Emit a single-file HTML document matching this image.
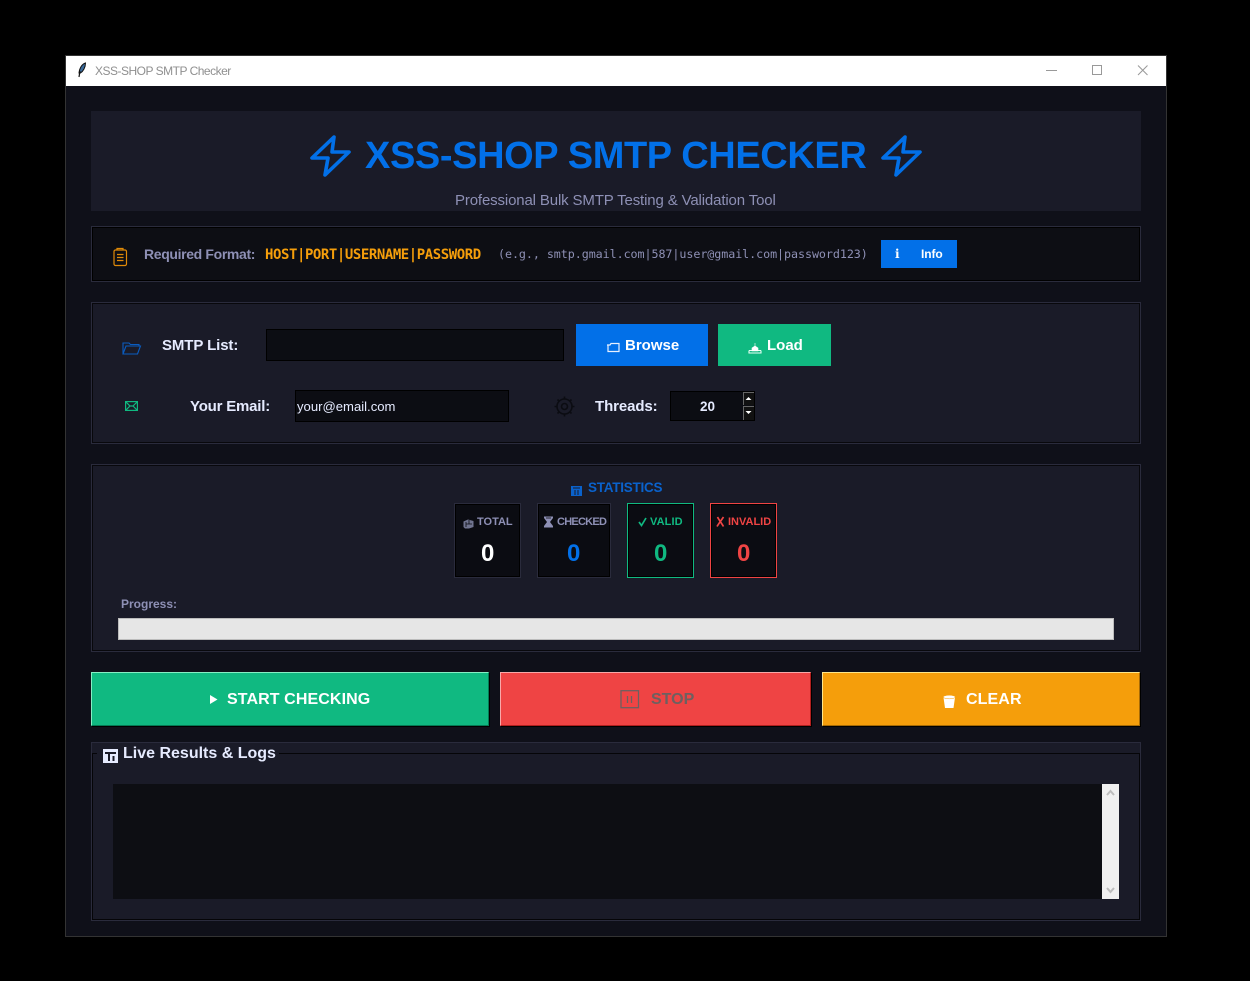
<!DOCTYPE html>
<html><head><meta charset="utf-8"><title>XSS-SHOP SMTP Checker</title>
<style>
html,body{margin:0;padding:0;background:#000;width:1250px;height:981px;overflow:hidden}
body{font-family:"Liberation Sans",sans-serif;position:relative}
.a{position:absolute;box-sizing:border-box}
.t{position:absolute;white-space:nowrap;line-height:1}
svg{position:absolute;overflow:visible}
.sec{position:absolute;box-sizing:border-box;background:#1a1b28;border:1px solid #2a2b3c;box-shadow:inset 0 0 0 1px #08080c}
.stat{position:absolute;box-sizing:border-box;background:#0b0c12;border:1px solid #2a2b3c;box-shadow:inset 0 0 0 1px #000;top:503px;height:75px}
.in{position:absolute;box-sizing:border-box;background:#0c0d13;border:1px solid #000}
</style></head><body>
<div class="a" style="left:65px;top:55px;width:1102px;height:882px;background:#0f1019;border:1px solid #333"></div>
<div class="a" style="left:66px;top:56px;width:1100px;height:30px;background:#fff"></div>
<svg style="left:76px;top:62px" width="13" height="16" viewBox="0 0 13 16"><path d="M9.500 1C6 2 3.500 6 3 11L4.500 11C7 9.500 9.500 5.500 9.500 1Z" fill="#3a6a9a" stroke="#111" stroke-width="1"/><path d="M4 9L3 15" stroke="#111" stroke-width="1.200"/></svg>
<div class="t" style="left:95px;top:65px;font-size:12px;color:#8f8f8f;letter-spacing:-.5px">XSS-SHOP SMTP Checker</div>
<svg style="left:1046px;top:65px" width="110" height="12"><path d="M0 5.500H11" stroke="#999"/><rect x="46.500" y="0.500" width="9" height="9" fill="none" stroke="#999"/><path d="M92 0.500L101.500 10M101.500 0.500L92 10" stroke="#999"/></svg>

<div class="a" style="left:91px;top:111px;width:1050px;height:100px;background:#1a1b28"></div>
<svg style="left:310px;top:134px" width="42" height="44" viewBox="0 0 42 44" fill="none" stroke="#0270e8" stroke-width="3.600" stroke-linejoin="round"><path d="M24 3L2 24H18L15 41L39 18H22Z"/></svg>
<svg style="left:881px;top:134px" width="42" height="44" viewBox="0 0 42 44" fill="none" stroke="#0270e8" stroke-width="3.600" stroke-linejoin="round"><path d="M24 3L2 24H18L15 41L39 18H22Z"/></svg>
<div class="t" style="left:365px;top:137px;font-size:38px;font-weight:bold;color:#0270e8;letter-spacing:-.39px">XSS-SHOP SMTP CHECKER</div>
<div class="t" style="left:455px;top:193px;font-size:15px;color:#8e90b5;letter-spacing:-.14px">Professional Bulk SMTP Testing &amp; Validation Tool</div>

<div class="a" style="left:91px;top:226px;width:1050px;height:56px;background:#0d0e14;border:1px solid #2a2b3c;box-shadow:inset 0 0 0 1px #000"></div>
<svg style="left:112px;top:247px" width="16" height="20" viewBox="0 0 16 20" fill="none" stroke="#e08a08" stroke-width="1.200"><rect x="2" y="3" width="12.500" height="15.500" rx="1.500"/><path d="M5 3V1.500H11V3M5 7.500H11.500M5 10.500H11.500M5 13.500H11.500"/></svg>
<div class="t" style="left:144px;top:247px;font-size:14px;font-weight:bold;color:#8e90b5;letter-spacing:-.35px">Required Format:</div>
<div class="t" style="left:265px;top:248px;font-size:14px;font-weight:bold;color:#f59e0b;font-family:'DejaVu Sans Mono',monospace;letter-spacing:-.44px">HOST|PORT|USERNAME|PASSWORD</div>
<div class="t" style="left:498px;top:249px;font-size:11.700px;color:#8e90b5;font-family:'DejaVu Sans Mono',monospace;letter-spacing:-.06px">(e.g., smtp.gmail.com|587|user@gmail.com|password123)</div>
<div class="a" style="left:881px;top:240px;width:76px;height:28px;background:#0270e8"></div>
<div class="t" style="left:895px;top:248px;font-size:12px;font-weight:bold;color:#fff;font-family:'DejaVu Serif',serif">i</div>
<div class="t" style="left:921px;top:248px;font-size:12px;font-weight:bold;color:#fff;letter-spacing:-.1px">Info</div>

<div class="sec" style="left:91px;top:302px;width:1050px;height:142px"></div>
<svg style="left:122px;top:341px" width="20" height="14" viewBox="0 0 20 14" fill="none" stroke="#0a5cc0" stroke-width="1.100"><path d="M1 13V2H7L8.500 3.500H17V5M1 13H15.500L18.500 5H4L1 13Z"/></svg>
<div class="t" style="left:162px;top:338px;font-size:15px;font-weight:bold;color:#e6ebff;letter-spacing:-.1px">SMTP List:</div>
<div class="in" style="left:266px;top:329px;width:298px;height:32px"></div>
<div class="a" style="left:576px;top:324px;width:132px;height:42px;background:#0270e8"></div>
<svg style="left:606px;top:342px" width="14" height="11" viewBox="0 0 14 11" fill="none" stroke="#e8f0ff" stroke-width="1.200"><path d="M1 3H4L5 1.500H13V9.500H2V3"/></svg>
<div class="t" style="left:625px;top:338px;font-size:15px;font-weight:bold;color:#fff">Browse</div>
<div class="a" style="left:718px;top:324px;width:113px;height:42px;background:#10b981"></div>
<svg style="left:748px;top:342px" width="14" height="12" viewBox="0 0 14 12"><path d="M1 8.500H4M10 8.500H13M1 8.500V11H13V8.500" fill="none" stroke="#e8fff6" stroke-width="1.100"/><path d="M7 1V5M4 6L7 4L10 6V9H4Z" fill="#fff" stroke="#fff" stroke-width=".6"/></svg>
<div class="t" style="left:767px;top:338px;font-size:15px;font-weight:bold;color:#fff">Load</div>

<svg style="left:125px;top:401px" width="13" height="10" viewBox="0 0 13 10" fill="none" stroke="#10b981" stroke-width="1.200"><rect x=".6" y=".6" width="11.800" height="8.800"/><path d="M1 1L5 5H8L12 1M1 9L5 5M12 9L8 5"/></svg>
<div class="t" style="left:190px;top:399px;font-size:15px;font-weight:bold;color:#e6ebff;letter-spacing:-.2px">Your Email:</div>
<div class="in" style="left:295px;top:390px;width:214px;height:32px"></div>
<div class="t" style="left:297px;top:400px;font-size:13.100px;color:#e6ebff">your@email.com</div>
<svg style="left:554px;top:396px" width="21" height="21" viewBox="0 0 21 21" fill="none" stroke="#0b0c12" stroke-width="1.600"><circle cx="10.500" cy="10.500" r="7.500"/><circle cx="10.500" cy="10.500" r="3"/><path d="M10.500 0.500V3M10.500 18V20.500M0.500 10.500H3M18 10.500H20.500M3.500 3.500L5.200 5.200M15.800 15.800L17.500 17.500M3.500 17.500L5.200 15.800M15.800 5.200L17.500 3.500"/></svg>
<div class="t" style="left:595px;top:399px;font-size:15px;font-weight:bold;color:#e6ebff;letter-spacing:-.1px">Threads:</div>
<div class="in" style="left:670px;top:391px;width:85px;height:30px"></div>
<div class="t" style="left:700px;top:400px;font-size:13.500px;font-weight:bold;color:#e6ebff">20</div>
<div class="a" style="left:743px;top:392px;width:11px;height:13px;background:#111;border:1px solid #666;border-right:0;border-bottom:0"></div>
<div class="a" style="left:743px;top:406px;width:11px;height:14px;background:#111;border:1px solid #666;border-right:0;border-bottom:0"></div>
<svg style="left:743px;top:392px" width="11" height="28"><path d="M2.500 8L5.500 5L8.500 8ZM2.500 19L5.500 22L8.500 19Z" fill="#fff"/></svg>

<div class="sec" style="left:91px;top:464px;width:1050px;height:188px"></div>
<svg style="left:571px;top:486px" width="11" height="10" viewBox="0 0 11 10"><rect width="11" height="10" fill="#0a62cc"/><path d="M2 2H9M4 4V9M7 4V9" stroke="#1a1b28"/></svg>
<div class="t" style="left:588px;top:481px;font-size:13.500px;font-weight:bold;color:#0a62cc;letter-spacing:-.25px">STATISTICS</div>

<div class="stat" style="left:454px;width:67px"></div>
<svg style="left:463px;top:519px" width="11" height="10" viewBox="0 0 11 10"><path d="M.5 2.500L5 .5L10.500 2V8L6 9.500H2L.5 8Z" fill="#70748f"/><path d="M3 3V8M6 1V5M3 5H9" stroke="#0b0c12" stroke-width=".8"/></svg>
<div class="t" style="left:477px;top:517px;font-size:11px;font-weight:bold;color:#8e90b5">TOTAL</div>
<div class="t" style="left:481px;top:542px;font-size:24px;font-weight:bold;color:#fff">0</div>

<div class="stat" style="left:537px;width:74px"></div>
<svg style="left:543px;top:516px" width="11" height="12" viewBox="0 0 11 12"><path d="M1 .5H10V2L7 6L10 10V11.500H1V10L4 6L1 2Z" fill="#8e90b5"/><path d="M3 2H8" stroke="#0b0c12" stroke-width=".8"/></svg>
<div class="t" style="left:557px;top:517px;font-size:11px;font-weight:bold;color:#8e90b5;letter-spacing:-.75px">CHECKED</div>
<div class="t" style="left:567px;top:542px;font-size:24px;font-weight:bold;color:#0270e8">0</div>

<div class="stat" style="left:627px;width:67px;border-color:#10b981"></div>
<svg style="left:638px;top:516px" width="10" height="11" viewBox="0 0 10 11"><path d="M1 6L3.500 9.500L8 2" fill="none" stroke="#10b981" stroke-width="1.700"/></svg>
<div class="t" style="left:650px;top:517px;font-size:11px;font-weight:bold;color:#10b981;letter-spacing:.1px">VALID</div>
<div class="t" style="left:654px;top:542px;font-size:24px;font-weight:bold;color:#10b981">0</div>

<div class="stat" style="left:710px;width:67px;border-color:#ef4444"></div>
<svg style="left:716px;top:516px" width="9" height="11" viewBox="0 0 9 11"><path d="M1.500 1C3 4 5.500 7 7.500 10.500M7.500 1C5.500 4 3 7 1 10.500" fill="none" stroke="#ef4444" stroke-width="1.700"/></svg>
<div class="t" style="left:728px;top:517px;font-size:11px;font-weight:bold;color:#ef4444">INVALID</div>
<div class="t" style="left:737px;top:542px;font-size:24px;font-weight:bold;color:#ef4444">0</div>

<div class="t" style="left:121px;top:598px;font-size:12px;font-weight:bold;color:#8e90b5">Progress:</div>
<div class="a" style="left:118px;top:618px;width:996px;height:22px;background:#e6e6e6;border:1px solid #bcbcbc"></div>

<div class="a" style="left:91px;top:672px;width:398px;height:54px;background:#10b981;border-top:1px solid #86efc4;border-left:1px solid #86efc4;border-right:1px solid #047a55;border-bottom:1px solid #047a55;box-shadow:1px 1px 0 #000"></div>
<svg style="left:210px;top:695px" width="8" height="9"><path d="M0 0L7.500 4.500L0 9Z" fill="#fff"/></svg>
<div class="t" style="left:227px;top:692px;font-size:16px;font-weight:bold;color:#fff;letter-spacing:.1px">START CHECKING</div>

<div class="a" style="left:500px;top:672px;width:311px;height:54px;background:#ef4444;border-top:1px solid #f9a8a8;border-left:1px solid #f9a8a8;border-right:1px solid #b01f1f;border-bottom:1px solid #b01f1f;box-shadow:1px 1px 0 #000"></div>
<svg style="left:620px;top:690px" width="20" height="19" fill="none" stroke="#6d6060" stroke-width="1.300"><rect x="1" y=".7" width="17.500" height="17"/><path d="M7.500 6V13M11.500 6V13"/></svg>
<div class="t" style="left:651px;top:692px;font-size:16px;font-weight:bold;color:#6d6060">STOP</div>

<div class="a" style="left:822px;top:672px;width:318px;height:54px;background:#f59e0b;border-top:1px solid #fde68a;border-left:1px solid #fde68a;border-right:1px solid #a66a05;border-bottom:1px solid #a66a05;box-shadow:1px 1px 0 #000"></div>
<svg style="left:942px;top:694px" width="15" height="15" viewBox="0 0 15 15"><path d="M1.500 3.500L3 14H11.500L13 3.500Z" fill="#fff"/><ellipse cx="7.250" cy="3" rx="6" ry="1.800" fill="#fff" stroke="#f59e0b" stroke-width=".5"/></svg>
<div class="t" style="left:966px;top:692px;font-size:16px;font-weight:bold;color:#fff;letter-spacing:.1px">CLEAR</div>

<div class="sec" style="left:91px;top:742px;width:1050px;height:179px;box-shadow:none"></div>
<div class="a" style="left:92px;top:753px;width:1048px;height:167px;border:1px solid #050508"></div>
<div class="a" style="left:97px;top:745px;width:182px;height:20px;background:#1a1b28"></div>
<svg style="left:103px;top:749px" width="15" height="14" viewBox="0 0 15 14"><rect width="15" height="14" fill="#e6ebff"/><path d="M2 3H13V5H2ZM5 5H7V12H5ZM9.500 7H11.500V12H9.500Z" fill="#1a1b28"/></svg>
<div class="t" style="left:123px;top:746px;font-size:16px;font-weight:bold;color:#e6ebff">Live Results &amp; Logs</div>
<div class="a" style="left:113px;top:784px;width:989px;height:115px;background:#0d0e13"></div>
<div class="a" style="left:1102px;top:784px;width:17px;height:115px;background:#f0f0f0"></div>
<svg style="left:1102px;top:784px" width="17" height="115" fill="none" stroke="#bdbdbd" stroke-width="2"><path d="M5 11L8.500 7L12 11M5 104L8.500 108L12 104"/></svg>
</body></html>
